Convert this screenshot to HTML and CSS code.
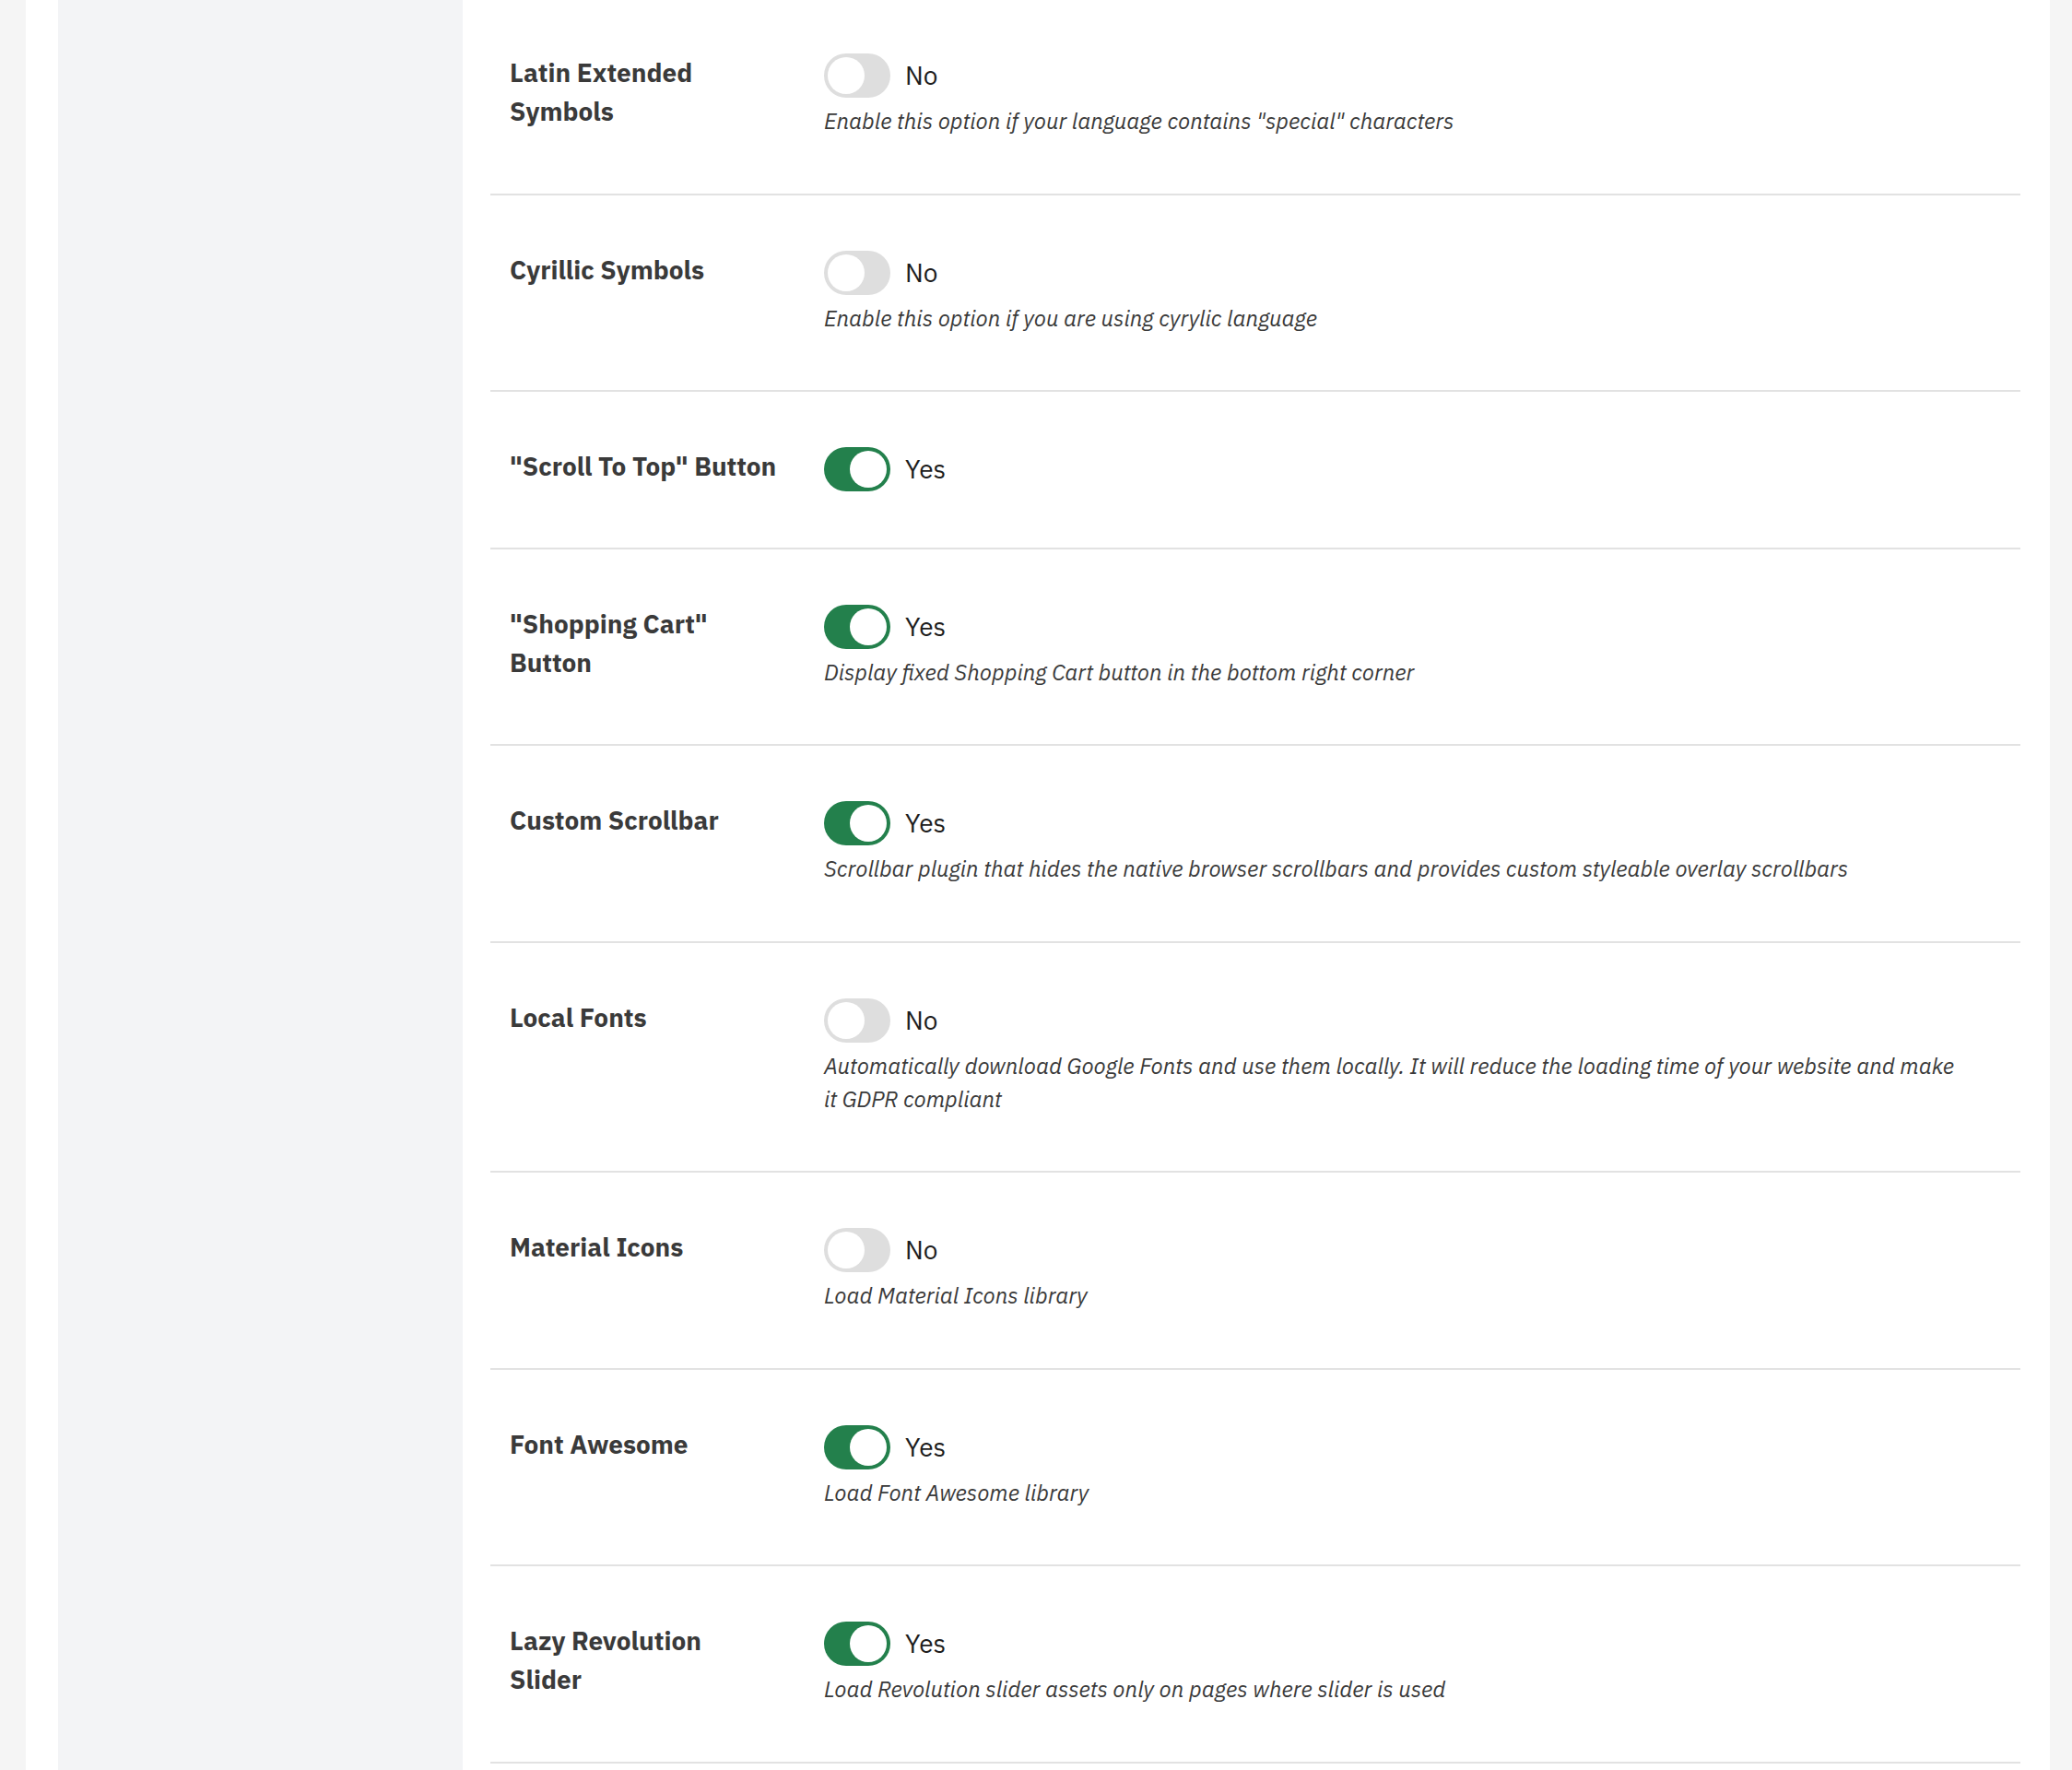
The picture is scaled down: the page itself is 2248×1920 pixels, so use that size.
FILE: index.html
```html
<!DOCTYPE html>
<html lang="en">
<head>
  <meta charset="UTF-8" />
  <meta name="viewport" content="width=device-width, initial-scale=1.0"/>
  <title>Theme Options</title>
  <link rel="stylesheet" href="styles.css">
</head>
<body>
  <div class="wrap">
    <aside class="sidebar"></aside>

    <main class="main">
      <div class="settings">

        <div class="option">
          <div class="option-label">Latin Extended Symbols</div>
          <div class="option-control">
            <label class="switch">
              <input type="checkbox" />
              <span class="slider"></span>
              <span class="state">No</span>
            </label>
            <p class="desc">Enable this option if your language contains "special" characters</p>
          </div>
        </div>

        <div class="option">
          <div class="option-label">Cyrillic Symbols</div>
          <div class="option-control">
            <label class="switch">
              <input type="checkbox" />
              <span class="slider"></span>
              <span class="state">No</span>
            </label>
            <p class="desc">Enable this option if you are using cyrylic language</p>
          </div>
        </div>

        <div class="option">
          <div class="option-label">"Scroll To Top" Button</div>
          <div class="option-control">
            <label class="switch">
              <input type="checkbox" checked />
              <span class="slider"></span>
              <span class="state">Yes</span>
            </label>
          </div>
        </div>

        <div class="option">
          <div class="option-label">"Shopping Cart" Button</div>
          <div class="option-control">
            <label class="switch">
              <input type="checkbox" checked />
              <span class="slider"></span>
              <span class="state">Yes</span>
            </label>
            <p class="desc">Display fixed Shopping Cart button in the bottom right corner</p>
          </div>
        </div>

        <div class="option">
          <div class="option-label">Custom Scrollbar</div>
          <div class="option-control">
            <label class="switch">
              <input type="checkbox" checked />
              <span class="slider"></span>
              <span class="state">Yes</span>
            </label>
            <p class="desc">Scrollbar plugin that hides the native browser scrollbars and provides custom styleable overlay scrollbars</p>
          </div>
        </div>

        <div class="option">
          <div class="option-label">Local Fonts</div>
          <div class="option-control">
            <label class="switch">
              <input type="checkbox" />
              <span class="slider"></span>
              <span class="state">No</span>
            </label>
            <p class="desc">Automatically download Google Fonts and use them locally. It will reduce the loading time of your website and make it GDPR compliant</p>
          </div>
        </div>

        <div class="option">
          <div class="option-label">Material Icons</div>
          <div class="option-control">
            <label class="switch">
              <input type="checkbox" />
              <span class="slider"></span>
              <span class="state">No</span>
            </label>
            <p class="desc">Load Material Icons library</p>
          </div>
        </div>

        <div class="option">
          <div class="option-label">Font Awesome</div>
          <div class="option-control">
            <label class="switch">
              <input type="checkbox" checked />
              <span class="slider"></span>
              <span class="state">Yes</span>
            </label>
            <p class="desc">Load Font Awesome library</p>
          </div>
        </div>

        <div class="option">
          <div class="option-label">Lazy Revolution Slider</div>
          <div class="option-control">
            <label class="switch">
              <input type="checkbox" checked />
              <span class="slider"></span>
              <span class="state">Yes</span>
            </label>
            <p class="desc">Load Revolution slider assets only on pages where slider is used</p>
          </div>
        </div>

      </div>
    </main>
  </div>

  <script>
    // keep the Yes / No text in sync with the switch
    document.querySelectorAll(".switch input").forEach((input) => {
      input.addEventListener("change", () => {
        input.parentNode.querySelector(".state").textContent = input.checked ? "Yes" : "No";
      });
    });
  </script>
</body>
</html>
```

FILE: styles.css
```css
:root {
  --page-bg: #f5f5f5;
  --sidebar-bg: #f3f4f6;
  --line: #e2e2e2;
  --text-color: #3a3a3a;
  --green: #23804c;
  --off: #dedede;
}

body {
  margin: 0;
  padding: 0;
  background: var(--page-bg);
  font-family: "IBM Plex Sans", Roboto, sans-serif;
  color: var(--text-color);
}

.wrap {
  display: flex;
  min-height: 100vh;
  margin: 0 24px 0 28px;
  padding-left: 35px;
  background: #fff;
}

.sidebar {
  flex: 0 0 439px;
  background: var(--sidebar-bg);
}

.main {
  flex: 1;
  padding: 0 32px 0 30px;
  overflow: hidden;
}

.settings {
  margin-top: -2px;
}

.option {
  display: flex;
  align-items: flex-start;
  padding: 60px 20px 60.5px 21px;
  border-bottom: 2px solid var(--line);
}

.option-label {
  flex: 0 0 341px;
  box-sizing: border-box;
  padding-right: 51px;
  font-size: 28px;
  font-weight: 700;
  line-height: 42px;
}

.option-control {
  flex: 1;
  padding-right: 40px;
}

.switch {
  display: flex;
  width: fit-content;
  align-items: center;
  gap: 16px;
  cursor: pointer;
}

.switch input {
  display: none;
}

.slider {
  width: 72px;
  height: 48px;
  box-sizing: border-box;
  padding: 4px;
  border-radius: 24px;
  background: var(--off);
  transition: background-color 0.2s;
}

.slider::before {
  content: "";
  display: block;
  width: 40px;
  height: 40px;
  border-radius: 50%;
  background: #fff;
  transition: transform 0.2s;
}

.switch input:checked + .slider {
  background: var(--green);
}

.switch input:checked + .slider::before {
  transform: translateX(24px);
}

.state {
  font-size: 28px;
  line-height: 48px;
  color: #1d1d1d;
}

.desc {
  margin: 7px 0 0;
  font-size: 24px;
  font-style: italic;
  line-height: 36px;
}
```
